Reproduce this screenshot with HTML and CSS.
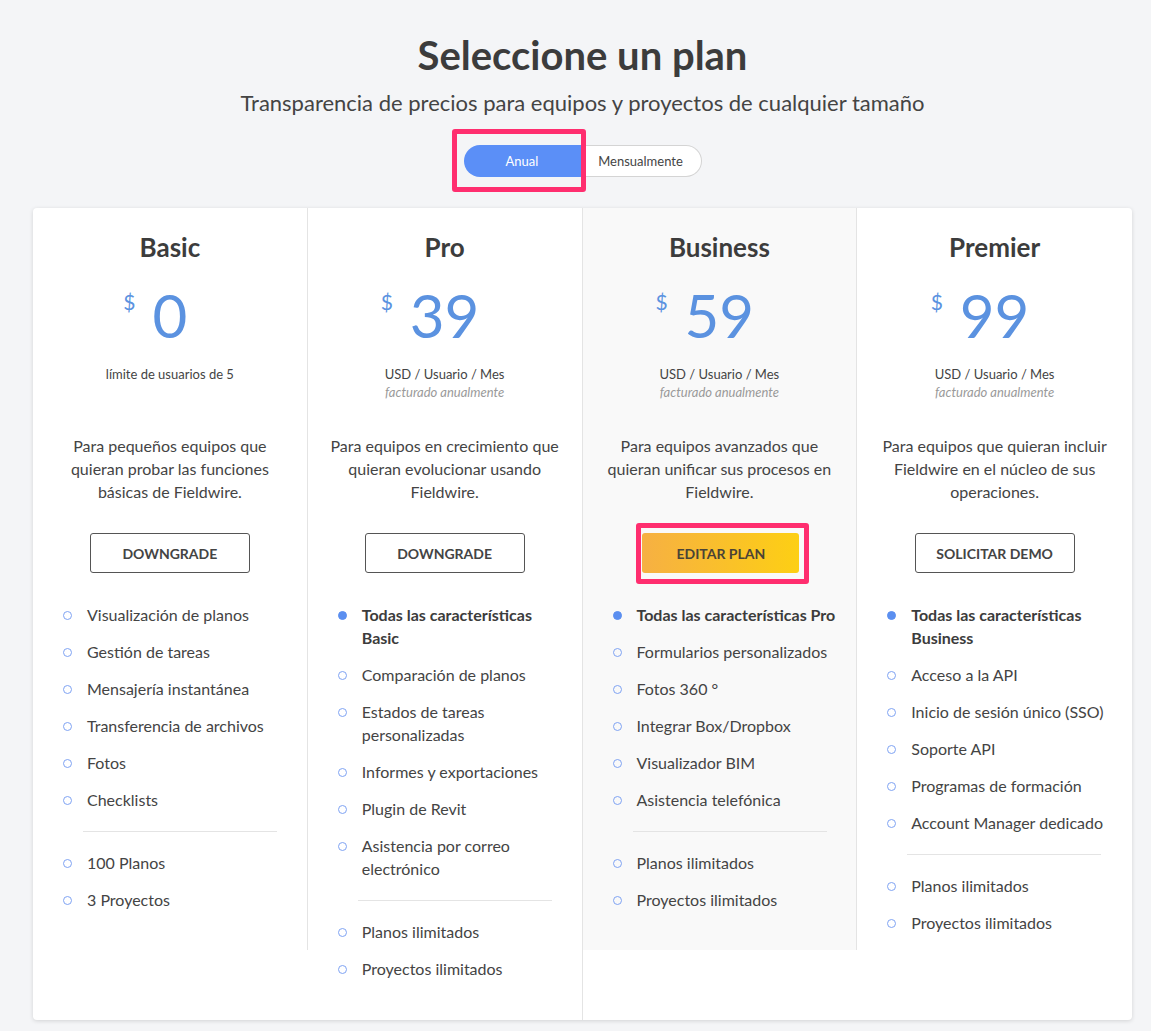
FILE: index.html
```html
<!DOCTYPE html>
<html lang="es">
<head>
<meta charset="utf-8">
<title>Seleccione un plan</title>
<link rel="stylesheet" href="styles.css">
</head>
<body>
<main class="page">
  <header class="intro">
    <h1 class="title">Seleccione un plan</h1>
    <p class="subtitle">Transparencia de precios para equipos y proyectos de cualquier tamaño</p>
    <div class="toggle">
      <span class="toggle-opt toggle-opt--active">Anual</span>
      <span class="toggle-opt">Mensualmente</span>
      <span class="highlight highlight--toggle"></span>
    </div>
  </header>

  <section class="plans">
    <article class="plan">
      <h2 class="plan-name">Basic</h2>
      <div class="price"><span class="amount"><span class="currency">$</span>0</span></div>
      <div class="price-info">
        <div class="price-unit">límite de usuarios de 5</div>
      </div>
      <p class="plan-desc">Para pequeños equipos que quieran probar las funciones básicas de Fieldwire.</p>
      <div class="action"><button class="btn">DOWNGRADE</button></div>
      <ul class="features">
        <li>Visualización de planos</li>
        <li>Gestión de tareas</li>
        <li>Mensajería instantánea</li>
        <li>Transferencia de archivos</li>
        <li>Fotos</li>
        <li>Checklists</li>
        <li class="sep"></li>
        <li>100 Planos</li>
        <li>3 Proyectos</li>
      </ul>
    </article>

    <article class="plan plan--tall">
      <h2 class="plan-name">Pro</h2>
      <div class="price"><span class="amount"><span class="currency">$</span>39</span></div>
      <div class="price-info">
        <div class="price-unit">USD / Usuario / Mes</div>
        <div class="price-note">facturado anualmente</div>
      </div>
      <p class="plan-desc">Para equipos en crecimiento que quieran evolucionar usando Fieldwire.</p>
      <div class="action"><button class="btn">DOWNGRADE</button></div>
      <ul class="features">
        <li class="strong">Todas las características Basic</li>
        <li>Comparación de planos</li>
        <li>Estados de tareas personalizadas</li>
        <li>Informes y exportaciones</li>
        <li>Plugin de Revit</li>
        <li>Asistencia por correo electrónico</li>
        <li class="sep"></li>
        <li>Planos ilimitados</li>
        <li>Proyectos ilimitados</li>
      </ul>
    </article>

    <article class="plan plan--current">
      <h2 class="plan-name">Business</h2>
      <div class="price"><span class="amount"><span class="currency">$</span>59</span></div>
      <div class="price-info">
        <div class="price-unit">USD / Usuario / Mes</div>
        <div class="price-note">facturado anualmente</div>
      </div>
      <p class="plan-desc">Para equipos avanzados que quieran unificar sus procesos en Fieldwire.</p>
      <div class="action">
        <span class="btn-wrap">
          <button class="btn btn--primary">EDITAR PLAN</button>
          <span class="highlight highlight--btn"></span>
        </span>
      </div>
      <ul class="features">
        <li class="strong">Todas las características Pro</li>
        <li>Formularios personalizados</li>
        <li>Fotos 360 °</li>
        <li>Integrar Box/Dropbox</li>
        <li>Visualizador BIM</li>
        <li>Asistencia telefónica</li>
        <li class="sep"></li>
        <li>Planos ilimitados</li>
        <li>Proyectos ilimitados</li>
      </ul>
    </article>

    <article class="plan plan--last">
      <h2 class="plan-name">Premier</h2>
      <div class="price"><span class="amount"><span class="currency">$</span>99</span></div>
      <div class="price-info">
        <div class="price-unit">USD / Usuario / Mes</div>
        <div class="price-note">facturado anualmente</div>
      </div>
      <p class="plan-desc">Para equipos que quieran incluir Fieldwire en el núcleo de sus operaciones.</p>
      <div class="action"><button class="btn">SOLICITAR DEMO</button></div>
      <ul class="features">
        <li class="strong">Todas las características Business</li>
        <li>Acceso a la API</li>
        <li>Inicio de sesión único (SSO)</li>
        <li>Soporte API</li>
        <li>Programas de formación</li>
        <li>Account Manager dedicado</li>
        <li class="sep"></li>
        <li>Planos ilimitados</li>
        <li>Proyectos ilimitados</li>
      </ul>
    </article>
  </section>
</main>
</body>
</html>
```

FILE: styles.css
```css
* { box-sizing: border-box; }

html, body {
  margin: 0;
  padding: 0;
  background: #f4f5f7;
}

body {
  font-family: Lato, "Open Sans", "Liberation Sans", sans-serif;
  color: #444;
}

.page {
  padding: 31px 19px 10px 33px;
}

.intro {
  display: flex;
  flex-direction: column;
  align-items: center;
}

.title {
  margin: 0;
  font-size: 40px;
  line-height: 48px;
  font-weight: 700;
  color: #3c3c3c;
}

.subtitle {
  margin: 11px 0 0;
  font-size: 22px;
  line-height: 26px;
  color: #444;
}

.toggle {
  position: relative;
  display: flex;
  margin-top: 29px;
  height: 32px;
}

.toggle-opt {
  display: flex;
  align-items: center;
  justify-content: center;
  height: 32px;
  font-size: 13px;
  color: #444;
  background: #fff;
  border: 1px solid #d4d4d4;
  border-left: none;
  border-radius: 0 16px 16px 0;
  width: 121px;
}

.toggle-opt--active {
  width: 117px;
  background: #5b8ff7;
  color: #fff;
  border: none;
  border-radius: 16px 0 0 16px;
}

.highlight {
  position: absolute;
  border: 5px solid #ff2e6f;
  border-radius: 3px;
  pointer-events: none;
}

.highlight--toggle {
  left: -12px;
  top: -16px;
  width: 134px;
  height: 63px;
}

.plans {
  margin-top: 31px;
  display: grid;
  grid-template-columns: repeat(4, minmax(0, 1fr));
  align-items: start;
  background: #fff;
  border-radius: 4px;
  box-shadow: 0 1px 4px rgba(0, 0, 0, 0.14);
}

.plan {
  min-height: 742px;
  padding: 23px 0 0;
  border-right: 1px solid #e4e4e4;
  text-align: center;
}

.plan--tall {
  padding-bottom: 26px;
}

.plan--current {
  background: #f9f9f9;
}

.plan--last {
  border-right: none;
}

.plan-name {
  margin: 0;
  font-size: 26px;
  line-height: 32px;
  font-weight: 700;
  color: #3c3c3c;
}

.price {
  margin-top: 22px;
  display: flex;
  justify-content: center;
}

.amount {
  position: relative;
  font-size: 60px;
  line-height: 60px;
  font-weight: 400;
  color: #5b92e0;
}

.currency {
  position: absolute;
  right: 100%;
  top: 7px;
  margin-right: 17px;
  font-size: 21px;
  line-height: 20px;
  font-weight: 400;
}

.price-info {
  margin-top: 20px;
  height: 36px;
}

.price-unit {
  font-size: 13px;
  line-height: 18px;
  color: #444;
}

.price-note {
  font-size: 13px;
  line-height: 18px;
  font-style: italic;
  color: #9a9a9a;
}

.plan-desc {
  margin: 33px 0 0;
  padding: 0 20px;
  font-size: 16px;
  line-height: 23px;
  color: #444;
}

.action {
  margin-top: 30px;
  display: flex;
  justify-content: center;
}

.btn-wrap {
  position: relative;
  display: inline-flex;
  margin-left: 3px;
}

.btn {
  width: 160px;
  height: 40px;
  padding: 0;
  background: #fff;
  border: 1px solid #555;
  border-radius: 3px;
  font-family: inherit;
  font-size: 14px;
  font-weight: 700;
  color: #444;
}

.btn--primary {
  width: 157px;
  border: none;
  background: linear-gradient(90deg, #f6b043 0%, #fdcf14 100%);
  color: #4a4336;
}

.highlight--btn {
  left: -6px;
  top: -10px;
  width: 173px;
  height: 61px;
}

.features {
  list-style: none;
  margin: 30px 0 0;
  padding: 0 13px 0 54px;
  text-align: left;
}

.features li {
  position: relative;
  font-size: 16px;
  line-height: 23px;
  color: #444;
  margin-bottom: 14px;
}

.features li::before {
  content: "";
  position: absolute;
  left: -24px;
  top: 8px;
  width: 7px;
  height: 7px;
  border: 1.5px solid #7fa3f3;
  border-radius: 50%;
}

.features li.strong {
  font-weight: 700;
  color: #3c3c3c;
}

.features li.strong::before {
  background: #5b8ff0;
  border-color: #5b8ff0;
}

.features li.sep {
  height: 1px;
  background: #e4e4e4;
  margin: 20px 0 19px -4px;
  width: 194px;
}

.features li.sep::before {
  display: none;
}
```
